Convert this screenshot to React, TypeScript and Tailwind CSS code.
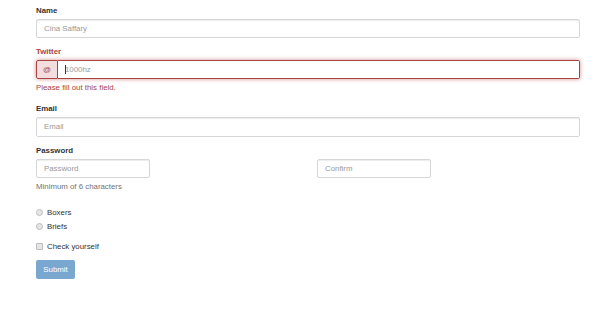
import React from "react";

const label = "block font-bold text-[#333] mb-[3px] leading-[11.2px]";
const input =
  "block h-[19px] rounded-[2px] border border-[#d6d6d6] bg-white px-[7px] text-[7.85px] text-[#555] shadow-[inset_0_1px_1px_rgba(0,0,0,0.075)] outline-none placeholder:text-[#999]";

export default function App() {
  return (
    <div
      className="w-[610px] h-[332px] bg-white text-[7.85px] leading-[11.2px] text-[#333]"
      style={{ fontFamily: '"Liberation Sans", Arial, sans-serif' }}
    >
      <form className="ml-[36px] w-[544px] pt-[5px]" onSubmit={(e) => e.preventDefault()}>
        <div className="mb-[8px]">
          <label className={label}>Name</label>
          <input className={input + " w-full"} placeholder="Cina Saffary" />
        </div>

        <div className="mb-[8px]">
          <label className="block font-bold text-[#a94442] mb-[3px] leading-[11.2px]">Twitter</label>
          <div className="flex h-[19px] rounded-[2px] shadow-[0_0_4px_rgba(206,132,131,0.9)]">
            <span className="flex w-[22px] items-center justify-center rounded-l-[2px] border border-[#a94442] bg-[#f2dede] text-[#a94442]">
              @
            </span>
            <div className="relative flex-1">
              <input
                className="block h-[19px] w-full rounded-r-[2px] border border-l-0 border-[#a94442] bg-white px-[7px] text-[7.85px] outline-none placeholder:text-[#999]"
                placeholder="1000hz"
              />
              <span className="absolute left-[7px] top-[5px] h-[9px] w-px bg-[#333]" />
            </div>
          </div>
          <div className="mt-[3px] text-[#a94442]">Please fill out this field.</div>
        </div>

        <div className="mb-[8px] pt-[1px]">
          <label className={label}>Email</label>
          <input className={input + " w-full h-[20px]"} placeholder="Email" />
        </div>

        <div className="mb-[8px]">
          <label className={label}>Password</label>
          <div className="flex">
            <div className="w-[281px]">
              <input className={input + " w-[114px]"} placeholder="Password" />
              <div className="mt-[3px] text-[#737373]">Minimum of 6 characters</div>
            </div>
            <div>
              <input className={input + " w-[114px]"} placeholder="Confirm" />
            </div>
          </div>
        </div>

        <div className="pt-[5px]">
          <div className="flex items-center h-[14px]">
            <span className="mr-[4px] h-[7px] w-[7px] rounded-full border border-[#bdbdbd] bg-[#e6e6e6]" />
            <span className="text-[#333]">Boxers</span>
          </div>
          <div className="flex items-center h-[14px]">
            <span className="mr-[4px] h-[7px] w-[7px] rounded-full border border-[#bdbdbd] bg-[#e6e6e6]" />
            <span className="text-[#333]">Briefs</span>
          </div>
        </div>

        <div className="mt-[6px] flex items-center h-[14px]">
          <span className="mr-[4px] h-[7px] w-[7px] rounded-[1px] border border-[#bdbdbd] bg-[#e6e6e6]" />
          <span className="text-[#333]">Check yourself</span>
        </div>

        <button
          type="submit"
          className="mt-[7px] h-[19px] w-[39px] rounded-[2px] bg-[#7aa7cf] text-[7.85px] text-white"
        >
          Submit
        </button>
      </form>
    </div>
  );
}
